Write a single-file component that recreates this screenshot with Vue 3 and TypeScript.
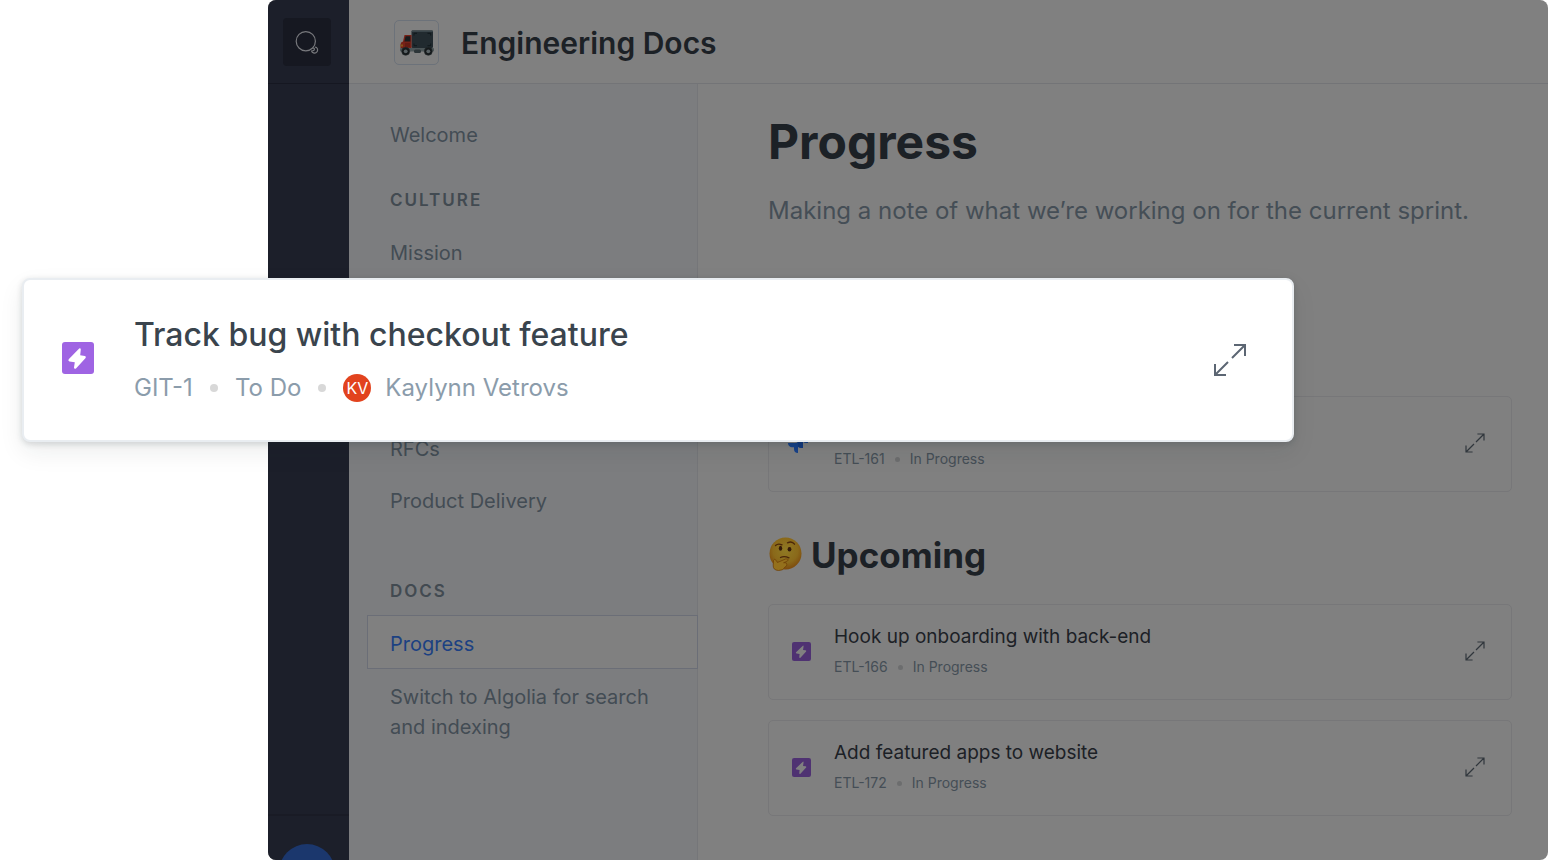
<script setup lang="ts">
interface Task {
  id: string
  title: string
  status: string
}

const upcoming: Task[] = [
  { id: 'ETL-166', title: 'Hook up onboarding with back-end', status: 'In Progress' },
  { id: 'ETL-172', title: 'Add featured apps to website', status: 'In Progress' },
]
</script>

<template>
  <div class="stage">
    <div class="window">
      <aside class="rail">
        <div class="rail-top">
          <button class="search" type="button" aria-label="Search">
            <svg viewBox="0 0 24 24" width="24" height="24" fill="none" stroke="#77787c" stroke-width="1.2">
              <circle cx="10.8" cy="11.2" r="9.6" />
              <path d="M17.600 18.300C19 17.800 19.700 18.600 19.300 19.700C18.700 21.300 17.300 20.400 16.600 21C17.200 23 19.600 23.600 21.300 22.500C23 21.300 23 18.700 21.600 17.600L20 17" />
            </svg>
          </button>
        </div>
        <div class="rail-bottom">
          <div class="avatar"></div>
        </div>
      </aside>

      <div class="body">
        <header class="header">
          <div class="logo">
            <svg viewBox="0 0 36 26" width="36" height="26">
              <rect x="1" y="18" width="34" height="3.4" rx="1" fill="#4c5557" />
              <rect x="12.5" y=".5" width="21.5" height="17.5" rx="1.2" fill="#212a2f" />
              <rect x="12.5" y=".5" width="21.5" height="1.6" rx=".8" fill="#394449" />
              <path d="M15 5.500V3.300H18M28.500 3.300H31.700V5.500M15 13.500V15.700H18M28.500 15.700H31.700V13.500" fill="none" stroke="#10181c" stroke-width="1" />
              <path d="M5.500 5H12.500V18H1.500V14.500Q1.500 12.200 4 11.600Z" fill="#762117" />
              <path d="M6.600 6.200H11.400V11.500H5.400Z" fill="#181b1d" />
              <rect x="6" y="13" width="5" height="4" fill="#641b13" />
              <path d="M1.600 14.500h2.400v2h-2.400z" fill="#87551a" />
              <rect x="15" y="19.500" width="7" height="3.500" rx="1.500" fill="#2c3538" />
              <g fill="#15191b" stroke="#252c2e" stroke-width=".6">
                <circle cx="6.700" cy="21.300" r="4" />
                <circle cx="29.300" cy="21.300" r="4" />
              </g>
              <g fill="#596164">
                <circle cx="6.700" cy="21.300" r="1.900" />
                <circle cx="29.300" cy="21.300" r="1.900" />
              </g>
            </svg>
          </div>
          <div class="site-title">Engineering Docs</div>
        </header>

        <div class="columns">
          <nav class="sidebar">
            <a class="item" href="#">Welcome</a>
            <h3 class="group">Culture</h3>
            <a class="item" href="#">Mission</a>
            <a class="item after-gap" href="#">RFCs</a>
            <a class="item" href="#">Product Delivery</a>
            <h3 class="group docs">Docs</h3>
            <a class="item active" href="#">Progress</a>
            <a class="item" href="#">Switch to Algolia for search and indexing</a>
          </nav>

          <main class="content">
            <h1>Progress</h1>
            <p class="lead">Making a note of what we’re working on for the current sprint.</p>

            <article class="card current">
              <svg class="jira" viewBox="0 0 22 22" width="20" height="20">
                <path d="M11 0h11v11h-2.200a4 4 0 0 1-4-4V4.700h-1A4 4 0 0 1 11 0z" fill="#164189" />
                <path d="M5.500 5.500h11v11h-2.300a4 4 0 0 1-4-4v-2.300H9.500a4 4 0 0 1-4-4.700z" fill="#12397e" />
                <path d="M0 11h11v11a4.500 4.500 0 0 1-4.400-4.500v-1.900H4.500A4.500 4.500 0 0 1 0 11z" fill="#164189" />
              </svg>
              <div class="card-text">
                <div class="card-title"></div>
                <div class="meta"><span>ETL-161</span><i class="dot"></i><span>In Progress</span></div>
              </div>
              <button class="expand" type="button" aria-label="Expand">
                <svg viewBox="0 0 20 20" width="20" height="20" fill="none" stroke="#30363c" stroke-width="1.200">
                  <path d="M12.400 1H19V7.600M19 1L11 9M7.600 19H1V12.400M1 19L9 11" />
                </svg>
              </button>
            </article>

            <h2>
              <svg viewBox="0 0 34 36" width="34" height="36">
                <defs>
                  <radialGradient id="face" cx="50%" cy="40%" r="60%">
                    <stop offset="0" stop-color="#8f7a24" />
                    <stop offset=".65" stop-color="#8a691a" />
                    <stop offset="1" stop-color="#7d4a0d" />
                  </radialGradient>
                </defs>
                <circle cx="17.500" cy="16.500" r="16" fill="url(#face)" />
                <path d="M7.500 8.500Q10 6 14 7.800M19.500 5.800Q24 3.600 26.500 7.200" fill="none" stroke="#4b260a" stroke-width="1.300" stroke-linecap="round" />
                <ellipse cx="12.500" cy="11.300" rx="1.700" ry="2.500" fill="#351b0a" />
                <ellipse cx="21.500" cy="12.300" rx="1.900" ry="2.300" fill="#351b0a" />
                <path d="M12.500 20.500Q16 18.600 21 20.800" fill="none" stroke="#4b260a" stroke-width="1.300" stroke-linecap="round" />
                <path d="M5.500 23.500Q6.500 21 8.300 23.500L9.400 25.500L17.600 22Q20.500 21.300 20.200 23.300Q18 25 15.600 25.700Q19 25 18.800 27.400Q19.200 29.200 17 30Q15.500 33.600 10.500 33.500Q4.800 33.200 5.200 28Z" fill="#94701c" stroke="#704008" stroke-width=".8" />
              </svg>
              <span>Upcoming</span>
            </h2>

            <article v-for="task in upcoming" :key="task.id" class="card">
              <svg class="bolt" viewBox="0 0 32 32" width="19" height="19">
                <rect width="32" height="32" rx="3.500" fill="#4f3272" />
                <path d="M18.300 6.200L6.800 17.200Q5.800 18.800 7.600 19.200L12.800 20L12.200 25.500Q12.500 27.400 14.200 26.400L23.800 16Q24.600 14.300 22.800 13.900L18.600 13.300L19.500 7.600Q19.500 5.700 18.300 6.200Z" fill="#808080" />
              </svg>
              <div class="card-text">
                <div class="card-title">{{ task.title }}</div>
                <div class="meta"><span>{{ task.id }}</span><i class="dot"></i><span>{{ task.status }}</span></div>
              </div>
              <button class="expand" type="button" aria-label="Expand">
                <svg viewBox="0 0 20 20" width="20" height="20" fill="none" stroke="#30363c" stroke-width="1.200">
                  <path d="M12.400 1H19V7.600M19 1L11 9M7.600 19H1V12.400M1 19L9 11" />
                </svg>
              </button>
            </article>
          </main>
        </div>
      </div>
    </div>

    <article class="spotlight">
      <svg class="bolt" viewBox="0 0 32 32" width="32" height="32">
        <rect width="32" height="32" rx="3" fill="#9f64e3" />
        <path d="M17.200 6.400L6.700 17.300Q5.600 18.900 7.500 19.400L12.800 20.300L12 25.500Q12.200 27.400 14 26.500L23.600 16Q24.600 14.300 22.800 13.900L18.200 13.300L18.800 7.600Q18.700 5.600 17.200 6.400Z" fill="#fff" />
      </svg>
      <div class="spot-text">
        <div class="spot-title">Track bug with checkout feature</div>
        <div class="spot-meta">
          <span>GIT-1</span><i class="dot"></i><span>To Do</span><i class="dot"></i>
          <span class="initials">KV</span><span>Kaylynn Vetrovs</span>
        </div>
      </div>
      <button class="expand" type="button" aria-label="Expand">
        <svg viewBox="0 0 32 32" width="32" height="32" fill="none" stroke="#5c6673" stroke-width="2">
          <path d="M20 1H31V12M31 1L18 14M12 31H1V20M1 31L14 18" />
        </svg>
      </button>
    </article>
  </div>
</template>

<style>
body {
  background: #fff;
}
</style>

<style scoped>
* {
  box-sizing: border-box;
}
.stage {
  position: relative;
  display: flex;
  min-height: 100vh;
  padding-left: 268px;
  font-family: Inter, "Liberation Sans", sans-serif;
}
svg {
  display: block;
  flex: none;
}
button {
  display: flex;
  align-items: center;
  justify-content: center;
  padding: 0;
  border: 0;
  background: none;
}
.window {
  flex: 1;
  display: flex;
  overflow: hidden;
  border-radius: 8px;
  background: #808080;
}
.rail {
  flex: none;
  width: 81px;
  display: flex;
  flex-direction: column;
  justify-content: space-between;
  background: #1c1f2a;
}
.rail-top {
  height: 84px;
  padding: 18px 15px;
  border-bottom: 1px solid #151721;
}
.search {
  width: 48px;
  height: 48px;
  border-radius: 4px;
  background: #161821;
}
.rail-bottom {
  height: 46px;
  padding: 28px 11px 0;
  overflow: hidden;
  border-top: 2px solid #191b25;
}
.avatar {
  width: 56px;
  height: 56px;
  border-radius: 50%;
  background: #1b376d;
}
.body {
  flex: 1;
  min-width: 0;
  display: flex;
  flex-direction: column;
}
.header {
  display: flex;
  align-items: center;
  gap: 22px;
  height: 84px;
  padding: 2px 0 0 45px;
  border-bottom: 1px solid #737477;
}
.logo {
  display: flex;
  align-items: center;
  justify-content: center;
  width: 45px;
  height: 45px;
  border: 1px solid #6c727a;
  border-radius: 5px;
}
.site-title {
  font-size: 30px;
  line-height: 40px;
  font-weight: 600;
  color: #1c2126;
}
.columns {
  flex: 1;
  display: flex;
}
.sidebar {
  flex: none;
  display: flex;
  flex-direction: column;
  width: 349px;
  padding: 25px 0 0 18px;
  border-right: 1px solid #757679;
  background: #7c7d7f;
}
.item {
  padding: 11px 40px 11px 23px;
  font-size: 20px;
  line-height: 30px;
  font-weight: 400;
  color: #434c54;
  text-decoration: none;
}
.group {
  margin: 27px 0 15px 23px;
  font-size: 17px;
  line-height: 24px;
  font-weight: 600;
  letter-spacing: 2px;
  text-transform: uppercase;
  color: #424a51;
}
.after-gap {
  margin-top: 144px;
}
.group.docs {
  margin: 52px 0 12px 23px;
}
.active {
  margin: 0 -1px 2px 0;
  padding: 13px 23px 9px 22px;
  border: 1px solid #6b6e77;
  background: #808080;
  color: #1c4182;
}
.content {
  flex: 1;
  min-width: 0;
  padding: 28px 36px 0 70px;
}
h1 {
  margin: 0;
  font-size: 48px;
  line-height: 60px;
  font-weight: 700;
  color: #1c2126;
}
.lead {
  margin: 24px 0 0;
  font-size: 24px;
  line-height: 30px;
  color: #454e56;
}
h2 {
  display: flex;
  align-items: center;
  gap: 9px;
  margin: 43px 0 29px;
  font-size: 35px;
  line-height: 40px;
  font-weight: 700;
  color: #1c2126;
}
.card {
  display: flex;
  align-items: center;
  height: 96px;
  padding: 0 26px 2px 23px;
  border: 1px solid #777779;
  border-radius: 5px;
}
.card + .card {
  margin-top: 20px;
}
.current {
  margin-top: 170px;
  padding-left: 19px;
}
.card-text {
  flex: 1;
  margin-left: 23px;
}
.current .card-text {
  margin-left: 26px;
}
.card-title {
  min-height: 24px;
  font-size: 19px;
  line-height: 24px;
  font-weight: 400;
  color: #1c2126;
}
.meta {
  display: flex;
  align-items: center;
  margin-top: 8px;
  font-size: 14px;
  line-height: 20px;
  color: #454e56;
}
.meta .dot {
  width: 5px;
  height: 5px;
  margin: 0 10px;
  border-radius: 50%;
  background: #6c6d6e;
}
.spotlight {
  position: absolute;
  top: 278px;
  left: 22px;
  right: 254px;
  display: flex;
  align-items: center;
  padding: 35px 46px 36px 38px;
  border: 2px solid #e9edf1;
  border-radius: 8px;
  background: #fff;
  box-shadow: 0 2px 6px rgba(20, 30, 40, 0.16), 0 10px 24px rgba(20, 40, 40, 0.08);
}
.spotlight .bolt {
  margin-bottom: 4px;
}
.spot-text {
  flex: 1;
  margin-left: 40px;
}
.spot-title {
  font-size: 32px;
  line-height: 40px;
  font-weight: 500;
  color: #3a444d;
}
.spot-meta {
  display: flex;
  align-items: center;
  margin-top: 17px;
  font-size: 24px;
  line-height: 32px;
  color: #8b9cab;
}
.spot-meta .dot {
  width: 8px;
  height: 8px;
  margin: 0 17px;
  border-radius: 50%;
  background: #d8d8d8;
}
.initials {
  width: 28px;
  height: 28px;
  margin-right: 14px;
  border-radius: 50%;
  background: #e2431e;
  color: #fff;
  font-size: 16px;
  line-height: 28px;
  text-align: center;
}
</style>
